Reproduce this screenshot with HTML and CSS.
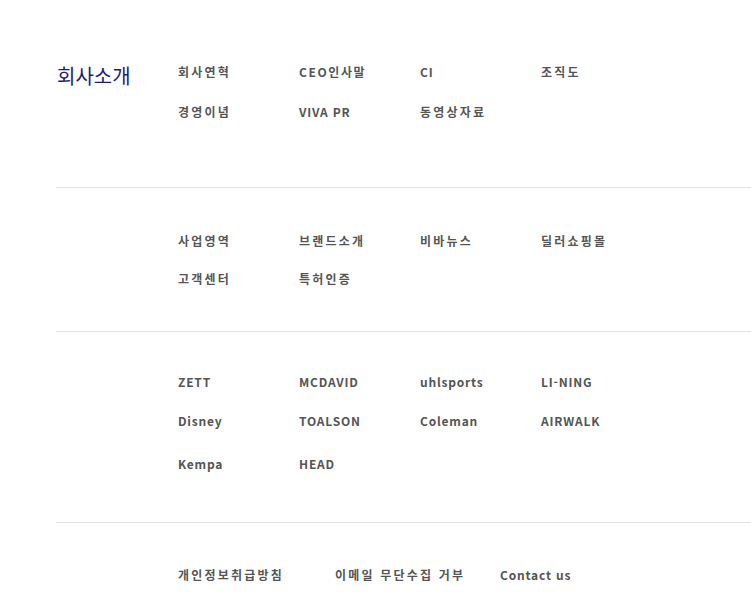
FILE: index.html
```html
<!DOCTYPE html>
<html lang="ko">
<head>
<meta charset="utf-8">
<title>사이트맵</title>
<link rel="stylesheet" href="styles.css">
</head>
<body>
<div class="sitemap">
  <section class="sec sec1">
    <h2 class="sec-title">회사소개</h2>
    <ul class="links">
      <li class="ko">회사연혁</li>
      <li class="mix">CEO인사말</li>
      <li>CI</li>
      <li class="ko">조직도</li>
      <li class="ko">경영이념</li>
      <li>VIVA PR</li>
      <li class="ko">동영상자료</li>
    </ul>
  </section>
  <section class="sec sec2">
    <div class="sec-title"></div>
    <ul class="links">
      <li class="ko">사업영역</li>
      <li class="ko">브랜드소개</li>
      <li class="ko">비바뉴스</li>
      <li class="ko">딜러쇼핑몰</li>
      <li class="ko">고객센터</li>
      <li class="ko">특허인증</li>
    </ul>
  </section>
  <section class="sec sec3">
    <div class="sec-title"></div>
    <ul class="links">
      <li>ZETT</li>
      <li>MCDAVID</li>
      <li>uhlsports</li>
      <li>LI-NING</li>
      <li>Disney</li>
      <li>TOALSON</li>
      <li>Coleman</li>
      <li>AIRWALK</li>
      <li class="last-row">Kempa</li>
      <li class="last-row">HEAD</li>
    </ul>
  </section>
  <section class="sec sec4">
    <div class="sec-title"></div>
    <ul class="footer-links">
      <li class="f1 ko">개인정보취급방침</li>
      <li class="f2 ko">이메일 무단수집 거부</li>
      <li class="f3">Contact us</li>
    </ul>
  </section>
</div>
</body>
</html>
```
FILE: styles.css
```css
html, body {
  margin: 0;
  padding: 0;
  background: #fff;
}
body {
  font-family: "Noto Sans CJK KR", "Noto Sans", sans-serif;
  color: #555;
}
.sitemap {
  margin-left: 56px;
}
.sec {
  display: flex;
  align-items: flex-start;
  border-top: 1px solid #e2e2e2;
}
.sec1 {
  border-top: none;
  padding: 64px 0 67px;
}
.sec2 {
  padding: 45px 0 44px;
}
.sec3 {
  padding: 42px 0 50px;
}
.sec4 {
  padding: 44px 0 20px;
}
.sec-title {
  width: 121px;
  padding-left: 1px;
  flex: none;
  margin: 0;
  font-size: 20px;
  font-weight: 400;
  line-height: 24px;
  color: #1e1e70;
  letter-spacing: 0;
}
.links {
  list-style: none;
  margin: 0;
  padding: 0;
  display: grid;
  grid-template-columns: repeat(4, 121px);
  row-gap: 24px;
}
.sec2 .links {
  row-gap: 22px;
}
.sec3 .links {
  row-gap: 23px;
}
.sec3 .last-row {
  margin-top: 4px;
}
.links li,
.footer-links li {
  font-size: 12px;
  line-height: 16px;
  font-weight: 700;
  letter-spacing: 0.8px;
  white-space: nowrap;
}
.links li.ko,
.footer-links li.ko {
  letter-spacing: 2.2px;
}
.links li.mix {
  letter-spacing: 1.6px;
}
.footer-links {
  list-style: none;
  margin: 0;
  padding: 0;
  display: flex;
}
.footer-links .f1 {
  width: 157px;
}
.footer-links .f2 {
  width: 165px;
}
```
